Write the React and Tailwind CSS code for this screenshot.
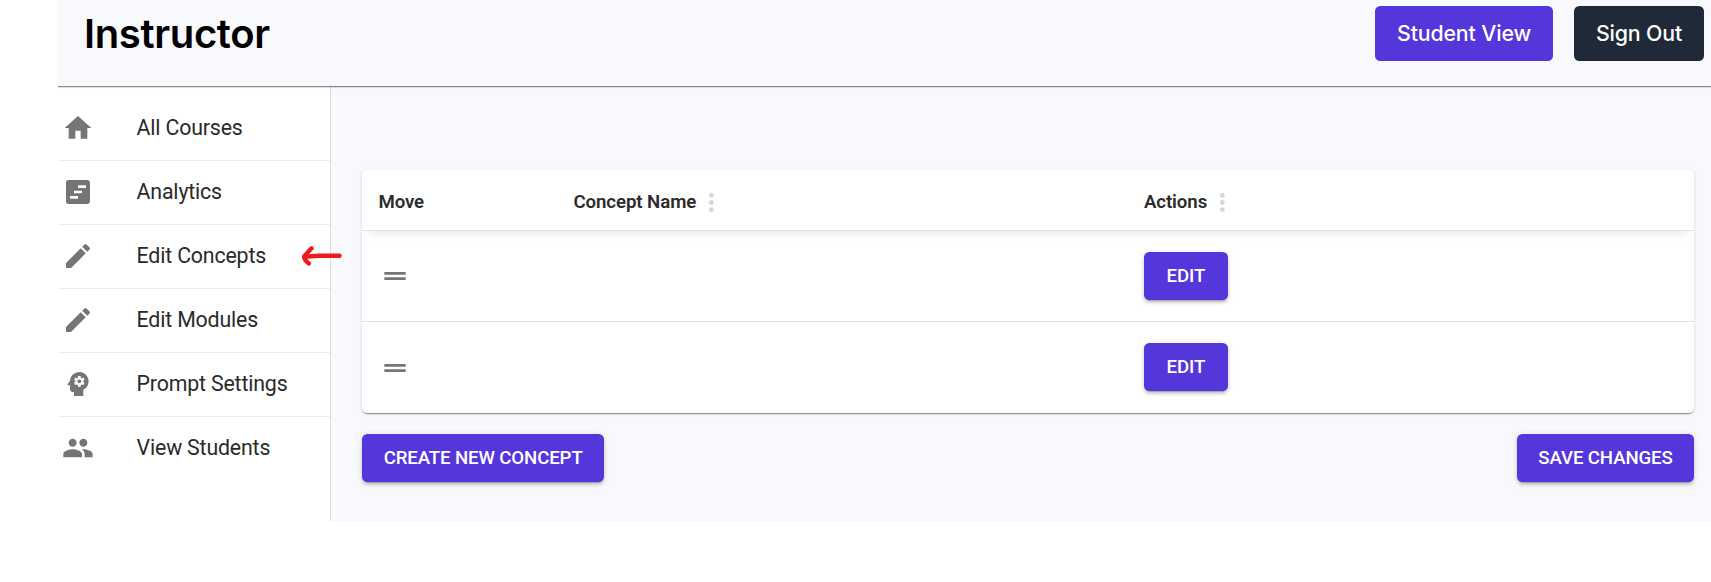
import {
  MdHome,
  MdViewTimeline,
  MdEdit,
  MdPsychology,
  MdPeople,
  MdDragHandle,
  MdMoreVert,
} from "react-icons/md";

const navItems = [
  { label: "All Courses", Icon: MdHome },
  { label: "Analytics", Icon: MdViewTimeline },
  { label: "Edit Concepts", Icon: MdEdit, marked: true },
  { label: "Edit Modules", Icon: MdEdit },
  { label: "Prompt Settings", Icon: MdPsychology },
  { label: "View Students", Icon: MdPeople },
];

function Arrow() {
  return (
    <svg
      className="absolute top-[19px] left-[242px] h-[24px] w-[44px]"
      viewBox="0 0 44 24"
      fill="none"
      stroke="#ec1c1c"
      strokeWidth="4.4"
      strokeLinecap="round"
      strokeLinejoin="round"
    >
      <path d="M39.5 11.8 L19 11.8 L4.5 12.8" />
      <path d="M11.5 4.4 C8.8 6.8 7.2 9.8 4.4 12 C3.6 14.6 6.4 17.6 8.8 19.4" />
    </svg>
  );
}

function NavItem({ label, Icon, marked, last }) {
  return (
    <li
      className={
        "relative flex h-16 items-center pl-[4.4px] " +
        (last ? "pb-[2px]" : "border-b border-[#ebebeb] pb-px")
      }
    >
      <Icon className="size-8 text-[#757575]" />
      <span className="ml-[42.2px] text-[21.33px] leading-8 tracking-[-0.17px] text-[#2a2a2a]">
        {label}
      </span>
      {marked && <Arrow />}
    </li>
  );
}

function Button({ children, className = "" }) {
  return (
    <button
      className={
        "h-[48px] rounded-[5.33px] bg-[#5436da] text-[18.67px] font-medium tracking-[-0.13px] text-white uppercase shadow-[0_4px_1px_-3px_rgba(0,0,0,0.2),0_3px_3px_0_rgba(0,0,0,0.14),0_1px_7px_0_rgba(0,0,0,0.12)] " +
        className
      }
    >
      {children}
    </button>
  );
}

function HeadCell({ children, menu }) {
  return (
    <div className="flex h-[30px] items-center pl-[16px] text-[18.67px] leading-[28px] font-semibold tracking-[-0.08px] text-[#2b2b2b]">
      <span className="pb-[2px]">{children}</span>
      {menu && (
        <MdMoreVert className="ml-[1px] size-[28.8px] text-[#d6d6d6]" />
      )}
    </div>
  );
}

function Row({ last }) {
  return (
    <div
      className={
        "grid grid-cols-[195px_570.5px_1fr] items-center " +
        (last ? "h-[91px]" : "h-[91px] border-b border-[#e0e0e0]")
      }
    >
      <div className="pl-[16.6px]">
        <MdDragHandle className="size-8 text-[#757575]" />
      </div>
      <div />
      <div className={last ? "pb-px pl-[16px]" : "pl-[16px]"}>
        <Button className="w-[84px]">Edit</Button>
      </div>
    </div>
  );
}

export default function App() {
  return (
    <div className="h-[582px] bg-white pl-[58px] font-['Roboto',sans-serif]">
      <div className="flex h-[521px] flex-col overflow-hidden bg-[#f8f9fd]">
        <header className="z-10 flex h-[86px] shrink-0 items-start justify-between bg-[#f8f9fd] pt-[6px] pr-[7px] pl-[26px] font-['Inter',sans-serif] shadow-[0_1px_1px_0_rgba(0,0,0,0.36),0_1px_2px_0_rgba(0,0,0,0.2)]">
          <h1 className="mt-[3.5px] text-[40px] leading-[48px] font-semibold tracking-[-0.35px] text-black">
            Instructor
          </h1>
          <div className="flex gap-[21px] text-[21.33px] font-medium tracking-[-0.15px] text-white">
            <button className="h-[54.5px] w-[178px] rounded-[5.33px] bg-[#5436da] pt-px">
              Student View
            </button>
            <button className="h-[54.5px] w-[130px] rounded-[5.33px] bg-[#1f2937] pt-px">
              Sign Out
            </button>
          </div>
        </header>
        <div className="flex flex-1">
          <nav className="w-[273px] border-r border-[#dcdde0] bg-white pt-[11px]">
            <ul>
              {navItems.map((item, i) => (
                <NavItem key={item.label} {...item} last={i === navItems.length - 1} />
              ))}
            </ul>
          </nav>
          <main className="flex-1 pt-[84px] pr-[17px] pl-[31.4px]">
            <section className="rounded-[5.33px] bg-white shadow-[0_3px_1px_-2px_rgba(0,0,0,0.2),0_1px_1px_0_rgba(0,0,0,0.22),0_1px_4px_0_rgba(0,0,0,0.12)]">
              <div className="relative grid h-[61px] grid-cols-[195px_570.5px_1fr] items-center border-b border-[#e0e0e0] pt-[5px] shadow-[0_9px_10px_-8px_rgba(0,0,0,0.13)]">
                <HeadCell>Move</HeadCell>
                <HeadCell menu>Concept Name</HeadCell>
                <HeadCell menu>Actions</HeadCell>
              </div>
              <Row />
              <Row last />
            </section>
            <div className="mt-[21px] flex justify-between">
              <Button className="w-[241.5px]">Create New Concept</Button>
              <Button className="w-[177px]">Save Changes</Button>
            </div>
          </main>
        </div>
      </div>
    </div>
  );
}
